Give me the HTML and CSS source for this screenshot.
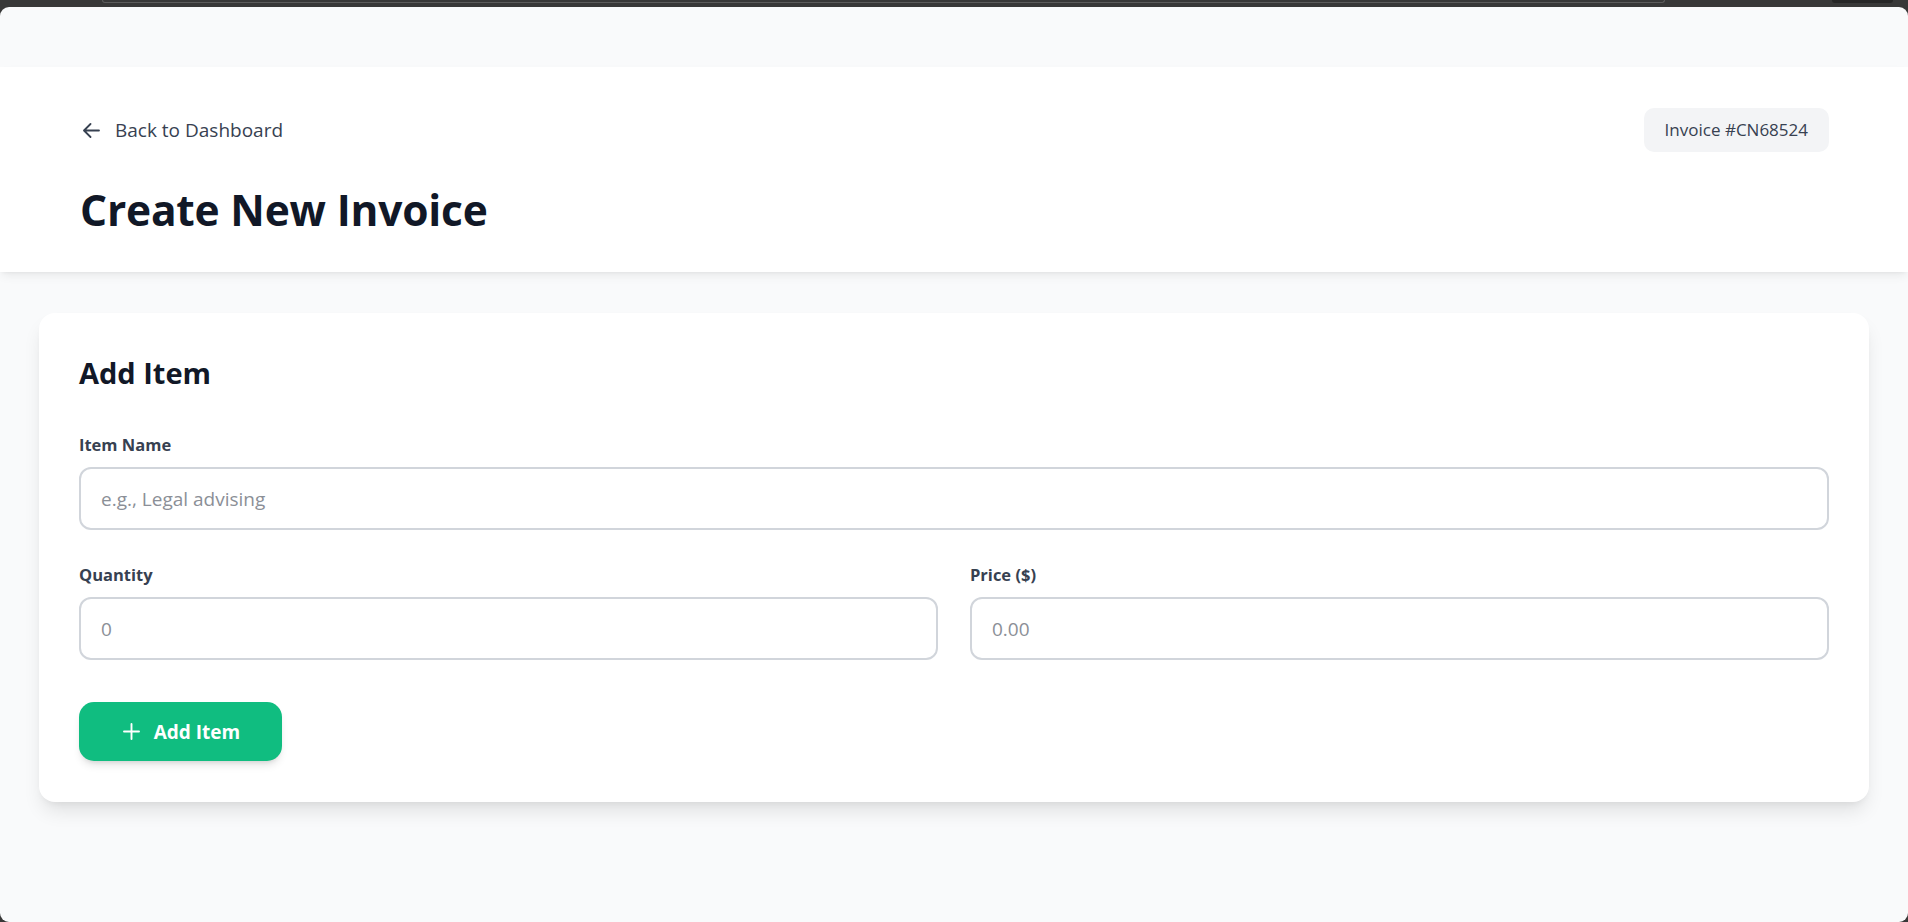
FILE: index.html
```html
<!DOCTYPE html>
<html lang="en">
<head>
<meta charset="utf-8">
<title>Create New Invoice</title>
<link rel="stylesheet" href="styles.css">
</head>
<body>
<div class="chrome">
  <div class="urlbar"></div>
  <div class="pill"></div>
</div>
<div class="window">
  <header class="page-header">
    <div class="header-top">
      <a class="back-link" href="#">
        <svg class="back-icon" viewBox="0 0 17 15" width="17" height="15" fill="none" stroke="#374151" stroke-width="1.8" stroke-linecap="round" stroke-linejoin="round"><path d="M16 7.5H1.2M7.5 1L1 7.5L7.5 14"/></svg>
        <span>Back to Dashboard</span>
      </a>
      <div class="badge">Invoice #CN68524</div>
    </div>
    <h1 class="title">Create New Invoice</h1>
  </header>

  <main class="card">
    <h2 class="card-title">Add Item</h2>
    <div class="field">
      <label class="label" for="name">Item Name</label>
      <input class="input" id="name" type="text" placeholder="e.g., Legal advising">
    </div>
    <div class="row">
      <div class="field">
        <label class="label" for="qty">Quantity</label>
        <input class="input" id="qty" type="text" placeholder="0">
      </div>
      <div class="field">
        <label class="label" for="price">Price ($)</label>
        <input class="input" id="price" type="text" placeholder="0.00">
      </div>
    </div>
    <button class="btn" type="button">
      <svg class="plus" viewBox="0 0 17 17" width="17" height="17" fill="none" stroke="#ffffff" stroke-width="1.9" stroke-linecap="round"><path d="M8.5 1V16M1 8.5H16"/></svg>
      <span>Add Item</span>
    </button>
  </main>
</div>
</body>
</html>
```

FILE: styles.css
```css
* { box-sizing: border-box; }

html, body {
  margin: 0;
  padding: 0;
  height: 922px;
  overflow: hidden;
}

body {
  background: #383838;
  font-family: "Open Sans", "Noto Sans", "Liberation Sans", sans-serif;
  color: #111827;
}

.chrome {
  height: 7px;
  display: flex;
  align-items: flex-start;
}

.urlbar {
  margin-left: 102px;
  width: 1563px;
  height: 3px;
  border: 1px solid #5c5c5c;
  border-top: none;
  border-radius: 0 0 6px 6px;
}

.pill {
  margin-left: 167px;
  width: 61px;
  height: 3px;
  background: #262626;
  border-radius: 0 0 6px 6px;
}

.window {
  height: 915px;
  background: #f9fafb;
  border-radius: 9px;
  padding-top: 60px;
  overflow: hidden;
}

.page-header {
  background: #ffffff;
  height: 205px;
  padding: 41px 79px 0 80px;
  box-shadow: 0 5px 10px -2px rgba(0, 0, 0, 0.08), 0 2px 4px -2px rgba(0, 0, 0, 0.06);
  position: relative;
}

.header-top {
  display: flex;
  align-items: center;
  justify-content: space-between;
  height: 44px;
}

.back-link {
  display: flex;
  align-items: center;
  gap: 15px;
  color: #374151;
  text-decoration: none;
  font-size: 19px;
  font-weight: 500;
  padding-left: 3px;
}

.back-icon { display: block; }

.badge {
  background: #f3f4f6;
  color: #374151;
  font-size: 17px;
  font-weight: 500;
  height: 44px;
  line-height: 44px;
  padding: 0 21px;
  border-radius: 10px;
}

.title {
  margin: 33px 0 0 0;
  font-size: 42.5px;
  line-height: 50px;
  font-weight: 700;
  color: #111827;
  letter-spacing: -0.2px;
}

.card {
  margin: 41px 39px 0 39px;
  background: #ffffff;
  border-radius: 16px;
  padding: 40px 40px 41px 40px;
  box-shadow: 0 12px 20px -4px rgba(0, 0, 0, 0.11), 0 5px 8px -5px rgba(0, 0, 0, 0.08);
}

.card-title {
  margin: 0 0 39px 0;
  font-size: 29px;
  line-height: 40px;
  font-weight: 700;
  color: #111827;
}

.field {
  display: flex;
  flex-direction: column;
}

.label {
  font-size: 16.5px;
  line-height: 25px;
  font-weight: 700;
  color: #374151;
  margin-bottom: 10px;
}

.input {
  height: 63px;
  width: 100%;
  border: 2px solid #d1d5db;
  border-radius: 12px;
  padding: 0 20px;
  font-family: inherit;
  font-size: 19px;
  color: #111827;
  background: #ffffff;
  outline: none;
}

.input::placeholder { color: #8b8f97; }

.row {
  display: grid;
  grid-template-columns: 1fr 1fr;
  gap: 32px;
  margin-top: 32px;
}

.btn {
  margin-top: 42px;
  height: 59px;
  width: 203px;
  display: flex;
  align-items: center;
  justify-content: center;
  gap: 14px;
  border: none;
  border-radius: 15px;
  background: #10bd80;
  color: #ffffff;
  font-family: inherit;
  font-size: 19px;
  font-weight: 700;
  box-shadow: 0 6px 10px -3px rgba(0, 0, 0, 0.14), 0 3px 5px -3px rgba(0, 0, 0, 0.1);
  padding: 0 0 0 2px;
}

.plus { display: block; }
```
